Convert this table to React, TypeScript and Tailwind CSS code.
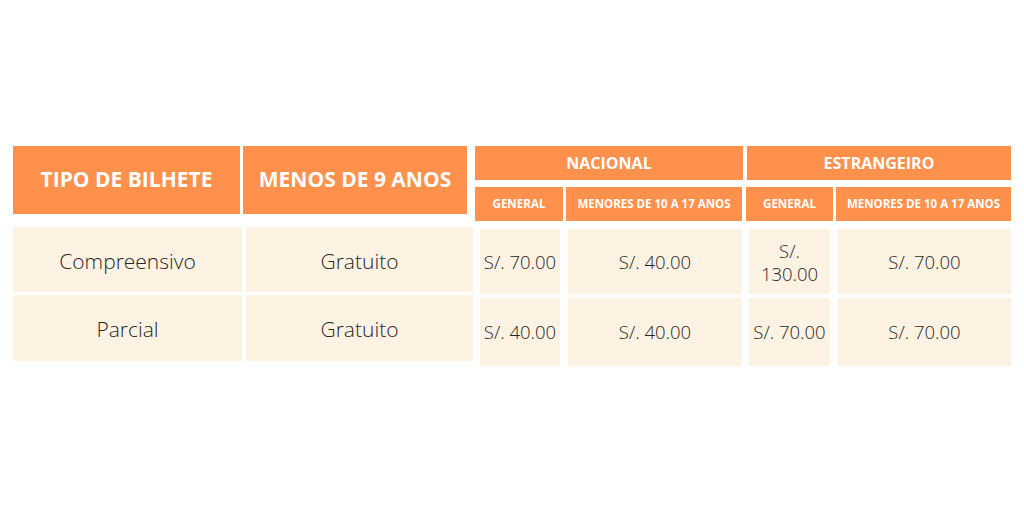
import React from "react";

const OR = "bg-[#ff914d]";
const CR = "bg-[#fef3e3]";

export default function App() {
  const font = { fontFamily: '"Open Sans", "Liberation Sans", sans-serif' };
  return (
    <div className="w-[1024px] h-[512px] bg-white overflow-hidden" style={font}>
      <div className="flex pt-[146px]">
        {/* Left block */}
        <div className="ml-[13px] w-[460px] flex flex-col">
          <div className="flex gap-[3px] h-[68px]">
            <div className={`w-[227px] ${OR} flex items-center justify-center text-white font-bold text-[21px]`}>TIPO DE BILHETE</div>
            <div className={`w-[224px] ${OR} flex items-center justify-center text-white font-bold text-[21px]`}>MENOS DE 9 ANOS</div>
          </div>
          <div className="flex gap-[4px] h-[65px] mt-[13px]">
            <div className={`w-[229px] ${CR} flex items-center justify-center pt-[5px] text-[#262626] font-light text-[21px]`}>Compreensivo</div>
            <div className={`w-[227px] ${CR} flex items-center justify-center pt-[5px] text-[#262626] font-light text-[21px]`}>Gratuito</div>
          </div>
          <div className="flex gap-[4px] h-[66px] mt-[3px]">
            <div className={`w-[229px] ${CR} flex items-center justify-center pt-[4px] text-[#262626] font-light text-[21px]`}>Parcial</div>
            <div className={`w-[227px] ${CR} flex items-center justify-center pt-[4px] text-[#262626] font-light text-[21px]`}>Gratuito</div>
          </div>
        </div>
        {/* Right block */}
        <div className="ml-[2px] w-[536px] flex flex-col">
          <div className="flex gap-[4px] h-[34px]">
            <div className={`w-[268px] ${OR} flex items-center justify-center text-white font-bold text-[16px]`}>NACIONAL</div>
            <div className={`w-[264px] ${OR} flex items-center justify-center text-white font-bold text-[16px]`}>ESTRANGEIRO</div>
          </div>
          <div className="flex h-[34px] mt-[7px]">
            <div className={`w-[88px] ${OR} flex items-center justify-center text-white font-bold text-[11.6px]`}>GENERAL</div>
            <div className={`ml-[3px] w-[176px] ${OR} flex items-center justify-center text-white font-bold text-[11.5px] whitespace-nowrap`}>MENORES DE 10 A 17 ANOS</div>
            <div className={`ml-[4px] w-[87px] ${OR} flex items-center justify-center text-white font-bold text-[11.6px]`}>GENERAL</div>
            <div className={`ml-[3px] w-[175px] ${OR} flex items-center justify-center text-white font-bold text-[11.5px] whitespace-nowrap`}>MENORES DE 10 A 17 ANOS</div>
          </div>
          <div className="flex h-[65px] mt-[8px] ml-[5px] text-[#262626] font-light text-[18.5px]">
            <div className={`w-[80px] ${CR} flex items-center justify-center whitespace-nowrap`}>S/. 70.00</div>
            <div className={`ml-[8px] w-[174px] ${CR} flex items-center justify-center`}>S/. 40.00</div>
            <div className={`ml-[7px] w-[81px] ${CR} flex items-center justify-center text-center leading-[23px] px-[6px]`}>S/. 130.00</div>
            <div className={`ml-[8px] w-[173px] ${CR} flex items-center justify-center`}>S/. 70.00</div>
          </div>
          <div className="flex h-[68px] mt-[4px] ml-[5px] text-[#262626] font-light text-[18.5px]">
            <div className={`w-[80px] ${CR} flex items-center justify-center whitespace-nowrap`}>S/. 40.00</div>
            <div className={`ml-[8px] w-[174px] ${CR} flex items-center justify-center`}>S/. 40.00</div>
            <div className={`ml-[7px] w-[81px] ${CR} flex items-center justify-center whitespace-nowrap`}>S/. 70.00</div>
            <div className={`ml-[8px] w-[173px] ${CR} flex items-center justify-center`}>S/. 70.00</div>
          </div>
        </div>
      </div>
    </div>
  );
}
